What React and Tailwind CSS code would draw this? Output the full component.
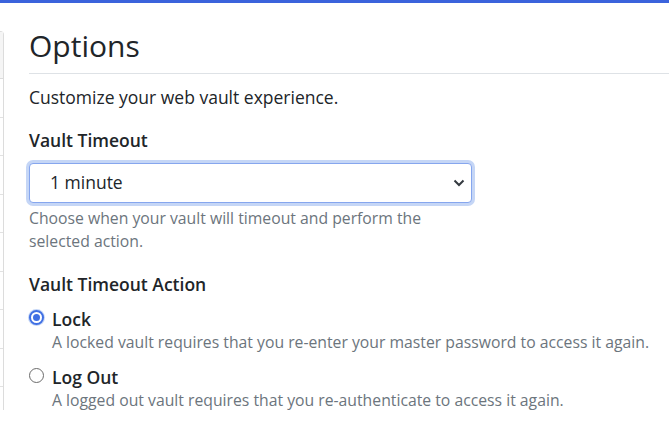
import { useState } from "react";

const font = { fontFamily: '"Open Sans", "Noto Sans", sans-serif' };

const timeouts = ["1 minute", "5 minutes", "15 minutes", "30 minutes", "1 hour"];

function Radio({ checked }) {
  return (
    <span
      className={`mt-[2.5px] flex h-[15px] w-[15px] shrink-0 items-center justify-center rounded-full border bg-white ${
        checked
          ? "border-2 border-[#3f6fe3] ring-1 ring-[#c5d6f6]"
          : "border-[#6b6b6b]"
      }`}
    >
      {checked && <span className="h-[7px] w-[7px] rounded-full bg-[#3f6fe3]" />}
    </span>
  );
}

function App() {
  const [timeout, setTimeoutValue] = useState(0);
  const [action, setAction] = useState("lock");

  const actions = [
    {
      id: "lock",
      label: "Lock",
      desc: "A locked vault requires that you re-enter your master password to access it again.",
    },
    {
      id: "logOut",
      label: "Log Out",
      desc: "A logged out vault requires that you re-authenticate to access it again.",
    },
  ];

  return (
    <div className="min-h-screen overflow-hidden bg-white text-[#212529]" style={font}>
      {/* Navbar edge */}
      <div className="h-[3px] bg-[#3b63dc]" />

      <div className="flex">
        {/* Sidebar edge */}
        <div className="mt-[28px] w-[4px] shrink-0 rounded-tr-[4px] border-r border-t border-[#dcdcdc]">
          <div className="h-[47px] border-b border-[#dcdcdc] bg-[#f5f5f5]" />
          {[0, 1, 2, 3, 4, 5, 6, 7].map((i) => (
            <div key={i} className="h-[38.5px] border-b border-[#e2e2e2]" />
          ))}
        </div>

        {/* Main content */}
        <div className="ml-[25px] flex-1">
          <h1 className="mt-[25px] border-b border-[#dee2e6] pb-[9px] text-[30px] font-normal leading-[36px]">
            Options
          </h1>
          <p className="mt-[10px] text-[17.5px] leading-[26.25px]">
            Customize your web vault experience.
          </p>

          <div className="w-[443px]">
            <label className="mt-[17px] block text-[17.5px] font-semibold leading-[26.25px]">
              Vault Timeout
            </label>
            <div
              className="mt-[9px] flex h-[40px] cursor-pointer items-center justify-between rounded-[4px] border border-[#86a6ee] bg-white pl-[20px] pr-[6px] ring-[3px] ring-[#c5d6f6]"
              onClick={() => setTimeoutValue((timeout + 1) % timeouts.length)}
            >
              <span className="text-[17.5px] leading-none">{timeouts[timeout]}</span>
              <svg width="12" height="10" viewBox="0 0 12 10" fill="none">
                <path d="M1.5 2.5 6 7 10.5 2.5" stroke="#343a40" strokeWidth="2" />
              </svg>
            </div>
            <p className="mt-[4px] text-[15.75px] leading-[23.5px] text-[#6c757d]">
              Choose when your vault will timeout and perform the selected action.
            </p>
          </div>

          <label className="mt-[17px] block text-[17.5px] font-semibold leading-[26.25px]">
            Vault Timeout Action
          </label>
          <div className="mt-[11px]">
            {actions.map((a, i) => (
              <div
                key={a.id}
                className={`flex cursor-pointer gap-[8px] ${i > 0 ? "mt-[14px]" : ""}`}
                onClick={() => setAction(a.id)}
              >
                <Radio checked={action === a.id} />
                <div>
                  <div className="mb-[2px] text-[17.5px] font-semibold leading-[22px]">{a.label}</div>
                  <div className="whitespace-nowrap text-[15.75px] leading-[20px] text-[#6c757d]">
                    {a.desc}
                  </div>
                </div>
              </div>
            ))}
          </div>
        </div>
      </div>
    </div>
  );
}

export default App;
